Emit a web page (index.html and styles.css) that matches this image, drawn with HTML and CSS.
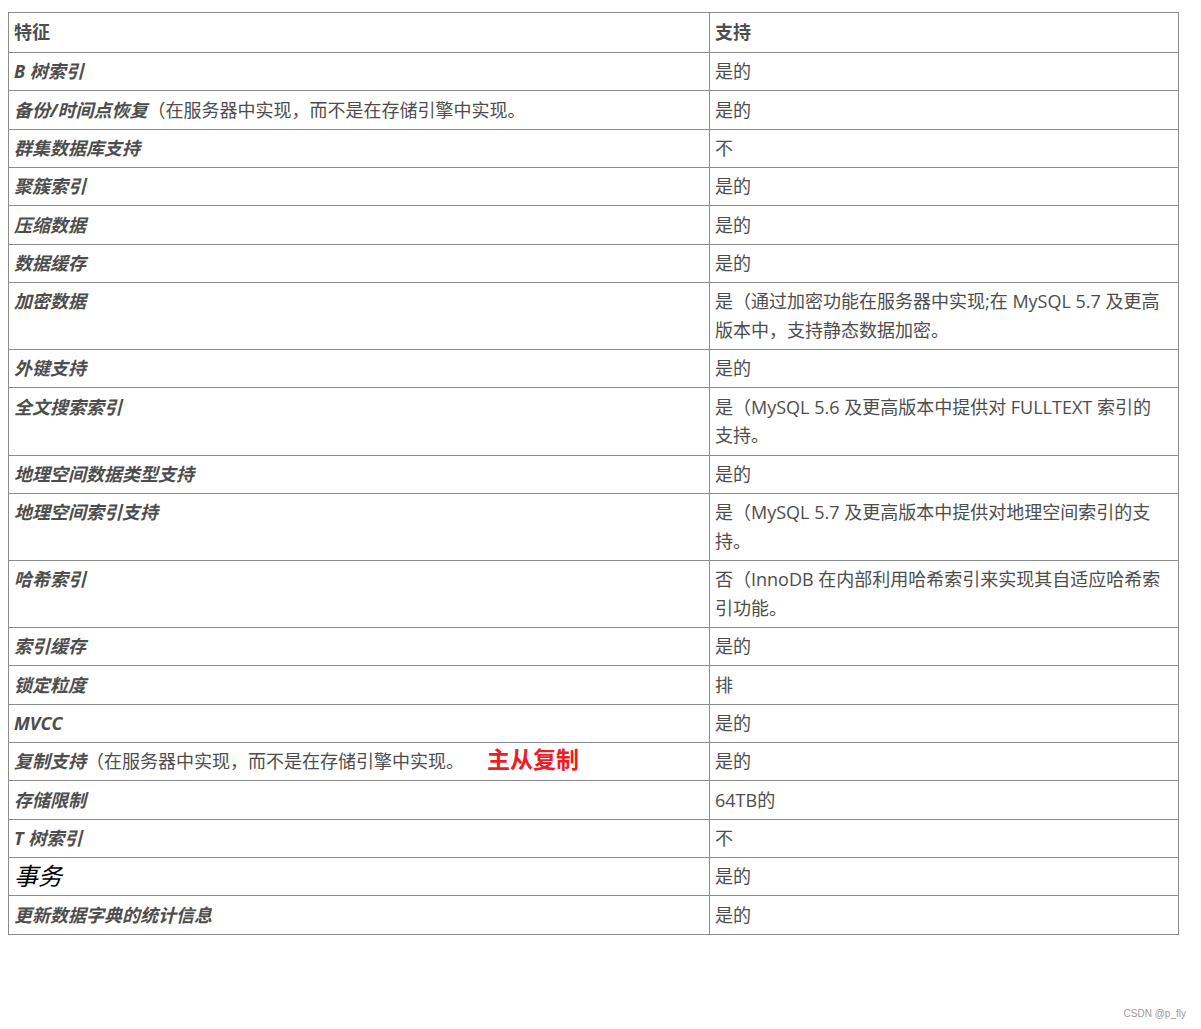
FILE: index.html
```html
<!DOCTYPE html>
<html lang="zh-CN">
<head>
<meta charset="utf-8">
<title>InnoDB 特征</title>
<link rel="stylesheet" href="styles.css">
</head>
<body>
<div class="page">
<table class="feat">
<colgroup><col class="c1"><col class="c2"></colgroup>
<thead>
<tr><th>特征</th><th class="v">支持</th></tr>
</thead>
<tbody>
<tr><td><em class="k">B 树索引</em></td><td class="v">是的</td></tr>
<tr><td><em class="k">备份/时间点恢复</em>（在服务器中实现，而不是在存储引擎中实现。</td><td class="v">是的</td></tr>
<tr><td><em class="k">群集数据库支持</em></td><td class="v">不</td></tr>
<tr><td><em class="k">聚簇索引</em></td><td class="v">是的</td></tr>
<tr><td><em class="k">压缩数据</em></td><td class="v">是的</td></tr>
<tr><td><em class="k">数据缓存</em></td><td class="v">是的</td></tr>
<tr><td><em class="k">加密数据</em></td><td class="v">是（通过加密功能在服务器中实现;在 MySQL 5.7 及更高版本中，支持静态数据加密。</td></tr>
<tr><td><em class="k">外键支持</em></td><td class="v">是的</td></tr>
<tr><td><em class="k">全文搜索索引</em></td><td class="v">是（MySQL 5.6 及更高版本中提供对 FULLTEXT 索引的支持。</td></tr>
<tr><td><em class="k">地理空间数据类型支持</em></td><td class="v">是的</td></tr>
<tr><td><em class="k">地理空间索引支持</em></td><td class="v">是（MySQL 5.7 及更高版本中提供对地理空间索引的支持。</td></tr>
<tr><td><em class="k">哈希索引</em></td><td class="v">否（InnoDB 在内部利用哈希索引来实现其自适应哈希索引功能。</td></tr>
<tr><td><em class="k">索引缓存</em></td><td class="v">是的</td></tr>
<tr><td><em class="k">锁定粒度</em></td><td class="v">排</td></tr>
<tr><td><em class="k">MVCC</em></td><td class="v">是的</td></tr>
<tr><td><em class="k">复制支持</em>（在服务器中实现，而不是在存储引擎中实现。<span class="red">主从复制</span></td><td class="v">是的</td></tr>
<tr><td><em class="k">存储限制</em></td><td class="v">64TB的</td></tr>
<tr><td><em class="k">T 树索引</em></td><td class="v">不</td></tr>
<tr><td><em class="big">事务</em></td><td class="v">是的</td></tr>
<tr><td><em class="k">更新数据字典的统计信息</em></td><td class="v">是的</td></tr>
</tbody>
</table>
</div>
<div class="mark">CSDN @p_fly</div>
</body>
</html>
```
FILE: styles.css
```css
html, body {
  margin: 0;
  padding: 0;
  background: #fff;
}
body {
  font-family: "Open Sans", "Noto Sans CJK SC", sans-serif;
  color: #4d4d4d;
  font-size: 18px;
  position: relative;
  min-height: 1029px;
}
.page {
  padding: 12px 8px 0 8px;
}
.feat {
  border-collapse: collapse;
  width: 1171px;
  table-layout: fixed;
}
.c1 { width: 701px; }
.feat th, .feat td {
  border: 1px solid #8c8c8c;
  padding: 4.28px 5px;
  line-height: 28.8px;
  text-align: left;
  vertical-align: top;
  font-size: 18px;
}
.feat .v {
  padding-right: 12px;
}
.feat th {
  font-weight: bold;
  padding-top: 5.1px;
  padding-bottom: 5.1px;
}
.k {
  font-style: italic;
  font-weight: bold;
}
.big {
  font-style: italic;
  font-weight: normal;
  font-size: 24px;
  line-height: 1;
  color: #000;
  vertical-align: -2px;
}
.red {
  color: #ee1c25;
  font-weight: bold;
  font-size: 23px;
  line-height: 1;
  margin-left: 23px;
}
.mark {
  position: absolute;
  right: 15px;
  top: 1008px;
  font-family: "Liberation Sans", sans-serif;
  font-size: 10px;
  color: #999;
}
```
